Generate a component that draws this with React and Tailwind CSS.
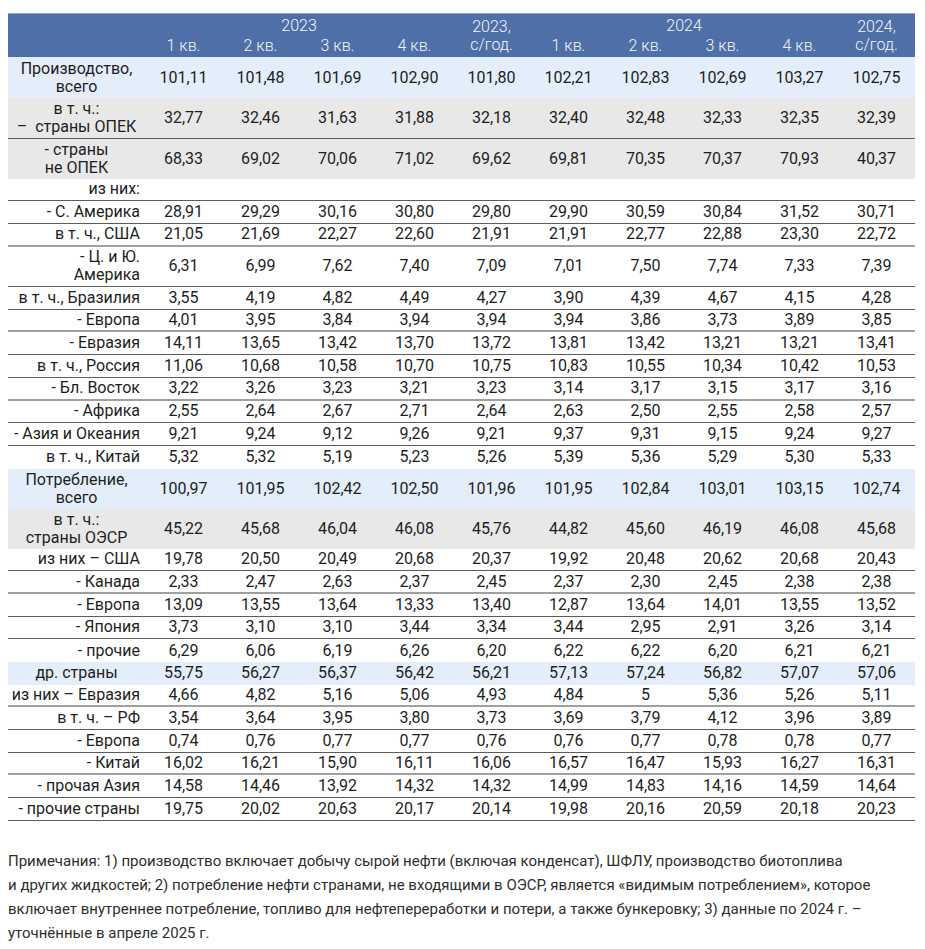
import React from "react";

const font = { fontFamily: "Roboto, 'Noto Sans', sans-serif" };

const rows = [
  { label: ["Производство,", "всего"], v: ["101,11", "101,48", "101,69", "102,90", "101,80", "102,21", "102,83", "102,69", "103,27", "102,75"], bg: "blue", h: "h-[41px]", align: "center" },
  { label: ["в т. ч.:", "–  страны ОПЕК"], v: ["32,77", "32,46", "31,63", "31,88", "32,18", "32,40", "32,48", "32,33", "32,35", "32,39"], bg: "gray", h: "h-[40.5px]", align: "center", line: "thin" },
  { label: ["- страны", "не ОПЕК"], v: ["68,33", "69,02", "70,06", "71,02", "69,62", "69,81", "70,35", "70,37", "70,93", "40,37"], bg: "gray", h: "h-[40px]", align: "center" },
  { label: ["из них:"], v: [], line: "thin" },
  { label: ["- С. Америка"], v: ["28,91", "29,29", "30,16", "30,80", "29,80", "29,90", "30,59", "30,84", "31,52", "30,71"], line: "thin" },
  { label: ["в т. ч., США"], v: ["21,05", "21,69", "22,27", "22,60", "21,91", "21,91", "22,77", "22,88", "23,30", "22,72"], line: "thick" },
  { label: ["- Ц. и Ю.", "Америка"], v: ["6,31", "6,99", "7,62", "7,40", "7,09", "7,01", "7,50", "7,74", "7,33", "7,39"], h: "h-[40.5px]", line: "thin" },
  { label: ["в т. ч., Бразилия"], v: ["3,55", "4,19", "4,82", "4,49", "4,27", "3,90", "4,39", "4,67", "4,15", "4,28"], line: "thin" },
  { label: ["- Европа"], v: ["4,01", "3,95", "3,84", "3,94", "3,94", "3,94", "3,86", "3,73", "3,89", "3,85"], line: "thick" },
  { label: ["- Евразия"], v: ["14,11", "13,65", "13,42", "13,70", "13,72", "13,81", "13,42", "13,21", "13,21", "13,41"], line: "thin" },
  { label: ["в т. ч., Россия"], v: ["11,06", "10,68", "10,58", "10,70", "10,75", "10,83", "10,55", "10,34", "10,42", "10,53"], line: "thin" },
  { label: ["- Бл. Восток"], v: ["3,22", "3,26", "3,23", "3,21", "3,23", "3,14", "3,17", "3,15", "3,17", "3,16"], line: "thick" },
  { label: ["- Африка"], v: ["2,55", "2,64", "2,67", "2,71", "2,64", "2,63", "2,50", "2,55", "2,58", "2,57"], line: "thin" },
  { label: ["- Азия и Океания"], v: ["9,21", "9,24", "9,12", "9,26", "9,21", "9,37", "9,31", "9,15", "9,24", "9,27"], line: "thin" },
  { label: ["в т. ч., Китай"], v: ["5,32", "5,32", "5,19", "5,23", "5,26", "5,39", "5,36", "5,29", "5,30", "5,33"] },
  { label: ["Потребление,", "всего"], v: ["100,97", "101,95", "102,42", "102,50", "101,96", "101,95", "102,84", "103,01", "103,15", "102,74"], bg: "blue", h: "h-[40px]", align: "center" },
  { label: ["в т. ч.:", "страны ОЭСР"], v: ["45,22", "45,68", "46,04", "46,08", "45,76", "44,82", "45,60", "46,19", "46,08", "45,68"], bg: "gray", h: "h-[40px]", align: "center" },
  { label: ["из них – США"], v: ["19,78", "20,50", "20,49", "20,68", "20,37", "19,92", "20,48", "20,62", "20,68", "20,43"], line: "thin" },
  { label: ["- Канада"], v: ["2,33", "2,47", "2,63", "2,37", "2,45", "2,37", "2,30", "2,45", "2,38", "2,38"], line: "thick" },
  { label: ["- Европа"], v: ["13,09", "13,55", "13,64", "13,33", "13,40", "12,87", "13,64", "14,01", "13,55", "13,52"], line: "thin" },
  { label: ["- Япония"], v: ["3,73", "3,10", "3,10", "3,44", "3,34", "3,44", "2,95", "2,91", "3,26", "3,14"], line: "thin" },
  { label: ["- прочие"], v: ["6,29", "6,06", "6,19", "6,26", "6,20", "6,22", "6,22", "6,20", "6,21", "6,21"] },
  { label: ["др. страны"], v: ["55,75", "56,27", "56,37", "56,42", "56,21", "57,13", "57,24", "56,82", "57,07", "57,06"], bg: "blue", align: "center" },
  { label: ["из них – Евразия"], v: ["4,66", "4,82", "5,16", "5,06", "4,93", "4,84", "5", "5,36", "5,26", "5,11"], line: "thick" },
  { label: ["в т. ч. – РФ"], v: ["3,54", "3,64", "3,95", "3,80", "3,73", "3,69", "3,79", "4,12", "3,96", "3,89"], line: "thin" },
  { label: ["- Европа"], v: ["0,74", "0,76", "0,77", "0,77", "0,76", "0,76", "0,77", "0,78", "0,78", "0,77"], line: "thin" },
  { label: ["- Китай"], v: ["16,02", "16,21", "15,90", "16,11", "16,06", "16,57", "16,47", "15,93", "16,27", "16,31"], line: "thick" },
  { label: ["- прочая Азия"], v: ["14,58", "14,46", "13,92", "14,32", "14,32", "14,99", "14,83", "14,16", "14,59", "14,64"], line: "thin" },
  { label: ["- прочие страны"], v: ["19,75", "20,02", "20,63", "20,17", "20,14", "19,98", "20,16", "20,59", "20,18", "20,23"], line: "thin" },
];

const bgs = { blue: "bg-[#e3eefa]", gray: "bg-[#e8e8e8]" };
const lines = { thin: "border-b border-[#5c5c5c]", thick: "border-b-2 border-[#a0a0a0]" };

function Row({ r }) {
  return (
    <div
      className={`grid grid-cols-[137px_repeat(10,77px)] items-center text-[16px] leading-[18px] text-[#1e1e1e] ${r.h || "h-[22.7px]"} ${bgs[r.bg] || ""} ${lines[r.line] || ""}`}
    >
      <div className={r.align === "center" ? "text-center" : "text-right pr-[5px] whitespace-nowrap"}>
        {r.label.map((l, i) => (
          <div key={i} className="whitespace-pre">{l}</div>
        ))}
      </div>
      {r.v.map((x, i) => (
        <div key={i} className="text-center">{x}</div>
      ))}
    </div>
  );
}

export default function App() {
  return (
    <div className="bg-white min-h-[949px] px-[8px] pt-[13px]" style={font}>
      <div className="w-[907px]">
        <div className="grid grid-cols-[137px_repeat(10,77px)] grid-rows-[22px_22px] h-[44px] bg-[#4e6fa8] text-[#f3f5fa] text-[16px] leading-[18px] font-light border-t border-[#8da3c9]">
          <div className="row-span-2" />
          <div className="col-span-4 flex items-center justify-center pt-[1px]">2023</div>
          <div className="row-span-2 flex flex-col items-center justify-center text-center">
            <span>2023,</span>
            <span>с/год.</span>
          </div>
          <div className="col-span-4 flex items-center justify-center pt-[1px]">2024</div>
          <div className="row-span-2 flex flex-col items-center justify-center text-center">
            <span>2024,</span>
            <span>с/год.</span>
          </div>
          {["1 кв.", "2 кв.", "3 кв.", "4 кв."].map((q) => (
            <div key={"a" + q} className="flex items-center justify-center pb-[2px]">{q}</div>
          ))}
          {["1 кв.", "2 кв.", "3 кв.", "4 кв."].map((q) => (
            <div key={"b" + q} className="flex items-center justify-center pb-[2px]">{q}</div>
          ))}
        </div>
        {rows.map((r, i) => (
          <Row key={i} r={r} />
        ))}
      </div>
      <p className="mt-[28px] text-[15px] leading-[24px] text-[#2e2e2e] whitespace-nowrap">
        Примечания: 1) производство включает добычу сырой нефти (включая конденсат), ШФЛУ, производство биотоплива
        <br />
        и других жидкостей; 2) потребление нефти странами, не входящими в ОЭСР, является «видимым потреблением», которое
        <br />
        включает внутреннее потребление, топливо для нефтепереработки и потери, а также бункеровку; 3) данные по 2024 г. –
        <br />
        уточнённые в апреле 2025 г.
      </p>
    </div>
  );
}
